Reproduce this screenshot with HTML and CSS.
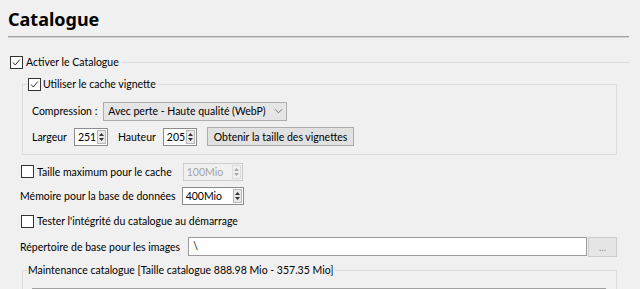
FILE: index.html
```html
<!DOCTYPE html>
<html lang="fr">
<head>
    <meta charset="UTF-8">
    <title>Catalogue</title>
    <link rel="stylesheet" href="styles.css">
</head>
<body>
    <div class="page">
        <h1 class="title">Catalogue</h1>

        <!-- Activer le Catalogue (flat group) -->
        <div class="group-head">
            <span class="check on"><svg viewBox="0 0 13 13"><path d="M2.5 6.5 L5 9.5 L10.5 3"/></svg></span>
            <span class="label">Activer le Catalogue</span>
            <span class="rule"></span>
        </div>

        <fieldset class="group cache-group">
            <legend>
                <span class="check on"><svg viewBox="0 0 13 13"><path d="M2.5 6.5 L5 9.5 L10.5 3"/></svg></span>
                <span class="label">Utiliser le cache vignette</span>
            </legend>
            <div class="row row-combo">
                <span class="label">Compression :</span>
                <div class="combo">
                    <span class="label">Avec perte - Haute qualité (WebP)</span>
                    <svg class="chevron" viewBox="0 0 10 6"><path d="M1 1 L5 5 L9 1"/></svg>
                </div>
            </div>
            <div class="row row-size">
                <span class="label">Largeur</span>
                <div class="spin w-small"><span class="val">251</span><span class="arrows"><svg viewBox="0 0 7 11"><path d="M3.5 1.5 L6 4.5 L1 4.5 Z M1 6.5 L6 6.5 L3.5 9.5 Z"/></svg></span></div>
                <span class="label">Hauteur</span>
                <div class="spin w-small"><span class="val">205</span><span class="arrows"><svg viewBox="0 0 7 11"><path d="M3.5 1.5 L6 4.5 L1 4.5 Z M1 6.5 L6 6.5 L3.5 9.5 Z"/></svg></span></div>
                <button class="btn">Obtenir la taille des vignettes</button>
            </div>
        </fieldset>

        <div class="row row-max">
            <span class="check"></span>
            <span class="label">Taille maximum pour le cache</span>
            <div class="spin w-max disabled"><span class="val">100Mio</span><span class="arrows"><svg viewBox="0 0 7 11"><path d="M3.5 1.5 L6 4.5 L1 4.5 Z M1 6.5 L6 6.5 L3.5 9.5 Z"/></svg></span></div>
        </div>

        <div class="row row-mem">
            <span class="label">Mémoire pour la base de données</span>
            <div class="spin w-mio"><span class="val">400Mio</span><span class="arrows"><svg viewBox="0 0 7 11"><path d="M3.5 1.5 L6 4.5 L1 4.5 Z M1 6.5 L6 6.5 L3.5 9.5 Z"/></svg></span></div>
        </div>

        <div class="row row-test">
            <span class="check"></span>
            <span class="label">Tester l'intégrité du catalogue au démarrage</span>
        </div>

        <div class="row row-dir">
            <span class="label">Répertoire de base pour les images</span>
            <div class="text-input">\</div>
            <button class="btn btn-browse">...</button>
        </div>

        <fieldset class="group maint-group">
            <legend><span class="label">Maintenance catalogue [Taille catalogue 888.98 Mio - 357.35 Mio]</span></legend>
            <div class="table-head">
                <div class="col col-wide"></div>
                <div class="col col-wide"></div>
                <div class="col"></div>
            </div>
        </fieldset>
    </div>
</body>
</html>
```

FILE: styles.css
```css
:root {
    --bg: #f0f0f0;
    --frame: #dcdcdc;
    --input-border: #8c8c8c;
    --btn-bg: #e1e1e1;
    --btn-border: #adadad;
    --disabled: #a3a3a3;
}

* {
    margin: 0;
    padding: 0;
    box-sizing: border-box;
}

body {
    font-family: Lato, 'Liberation Sans', sans-serif;
    font-size: 10.5px;
    color: #000;
    background: var(--bg);
    width: 640px;
    height: 289px;
    overflow: hidden;
}

.page {
    padding: 0 11px 0 8px;
}

.title {
    font-family: 'Noto Sans', sans-serif;
    font-size: 18px;
    font-weight: 700;
    line-height: 24px;
    padding-top: 7px;
    height: 37px;
    border-bottom: 1px solid #a0a0a0;
    box-shadow: 0 1px 0 #d2d2d2;
}

/* checkbox */
.check {
    display: inline-block;
    flex: none;
    width: 13px;
    height: 13px;
    border: 1px solid #333;
    background: #fff;
}

.check svg {
    display: block;
    width: 11px;
    height: 11px;
    fill: none;
    stroke: #222;
    stroke-width: 1.1;
}

.label {
    white-space: nowrap;
}

.group-head {
    display: flex;
    align-items: center;
    height: 20px;
    margin-top: 15px;
    padding-left: 2px;
}

.group-head .label {
    margin-left: 3px;
}

.rule {
    flex: 1;
    height: 1px;
    margin-left: 2px;
    background: var(--frame);
}

/* group boxes */
.group {
    border: 1px solid var(--frame);
    margin: 0 12px 0 14px;
}

.group legend {
    display: flex;
    align-items: center;
    height: 16px;
    margin-left: -4px;
    padding-right: 2px;
}

.group legend .check {
    margin-right: 2px;
}

.cache-group {
    margin-top: 4px;
    padding: 9px 0 8px 9px;
}

.row {
    display: flex;
    align-items: center;
}

.row-combo {
    height: 20px;
}

.row-combo .label {
    margin-right: 6px;
}

.combo {
    display: flex;
    align-items: center;
    justify-content: space-between;
    width: 184px;
    height: 19px;
    padding: 0 3px 0 4px;
    background: #e5e5e5;
    border: 1px solid var(--btn-border);
}

.chevron {
    width: 9px;
    height: 6px;
    fill: none;
    stroke: #666;
    stroke-width: 1;
}

.row-size {
    margin-top: 6px;
    height: 19px;
}

.row-size .spin {
    margin: 0 6px 0 7px;
}

.row-size .spin + .label {
    margin-left: 4px;
}

/* spin boxes */
.spin {
    display: flex;
    align-items: center;
    justify-content: space-between;
    height: 18px;
    padding: 0 1px 0 3px;
    background: #fff;
    border: 1px solid var(--input-border);
}

.w-small {
    width: 34px;
}

.w-mio {
    width: 62px;
}

.w-max {
    width: 60px;
}

.arrows {
    display: block;
    width: 9px;
    height: 14px;
    background: #e8e8e8;
    border: 1px solid #b8b8b8;
}

.arrows svg {
    display: block;
    width: 7px;
    height: 12px;
    fill: #333;
}

.spin.disabled {
    background: var(--bg);
    border-color: #cccccc;
    color: var(--disabled);
}

.spin.disabled .arrows {
    background: var(--bg);
    border-color: #dcdcdc;
}

.spin.disabled .arrows svg {
    fill: #a8a8a8;
}

/* buttons */
.btn {
    font: inherit;
    color: #000;
    height: 19px;
    padding: 0 6px;
    background: var(--btn-bg);
    border: 1px solid var(--btn-border);
}

.row-size .btn {
    margin-left: 4px;
}

.row-max {
    margin-top: 7px;
    height: 19px;
    padding-left: 13px;
}

.row-max .label {
    margin-left: 3px;
    margin-right: 11px;
}

.row-mem {
    margin-top: 6px;
    height: 18px;
    padding-left: 12px;
}

.row-mem .label {
    margin-right: 6px;
}

.row-test {
    margin-top: 7px;
    height: 18px;
    padding-left: 13px;
}

.row-test .label {
    margin-left: 3px;
}

.row-dir {
    margin-top: 7px;
    margin-right: 12px;
    height: 20px;
    padding-left: 12px;
    align-items: flex-start;
}

.row-dir .label {
    line-height: 20px;
    margin-right: 8px;
}

.text-input {
    flex: 1;
    height: 19px;
    line-height: 17px;
    padding-left: 4px;
    background: #fff;
    border: 1px solid #9a9a9a;
}

.btn-browse {
    width: 29px;
    height: 20px;
    margin-left: 1px;
    color: #888;
    font-size: 10px;
    background: #e5e5e5;
    border-color: #cccccc;
}

.maint-group {
    margin-top: 5px;
    padding: 0 10px 0 9px;
}

.maint-group legend {
    margin-left: -5px;
    padding-left: 1px;
}

.table-head {
    display: flex;
    height: 20px;
    margin-top: 10px;
    background: #fff;
    border: 1px solid #a0a0a0;
}

.table-head .col {
    flex: 1;
    border-right: 1px solid #d8d8d8;
}

.table-head .col-wide {
    flex: none;
    width: 225px;
}
```
